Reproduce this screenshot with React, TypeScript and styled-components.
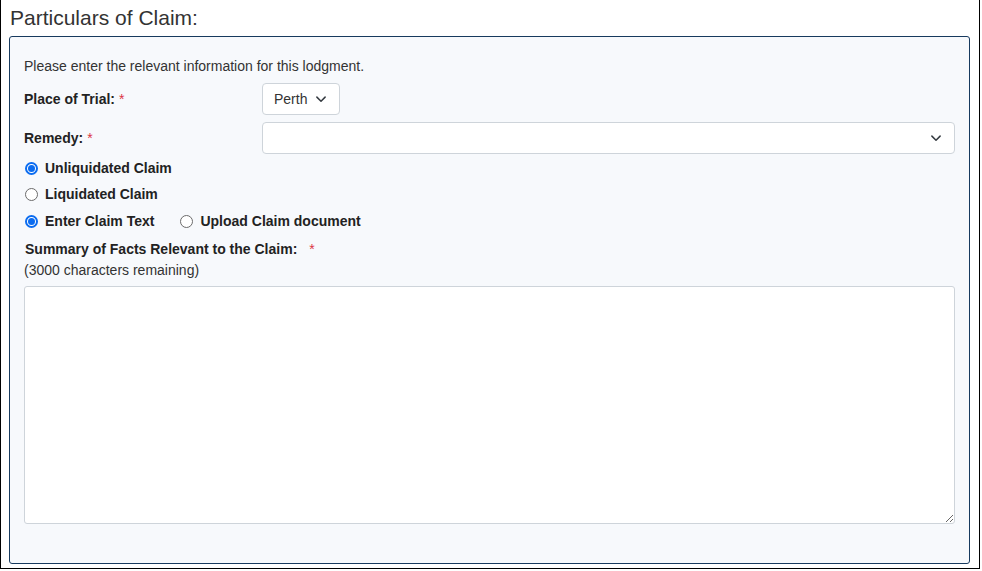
import React from "react";
import styled, { createGlobalStyle } from "styled-components";

const Global = createGlobalStyle`
  html, body { margin: 0; padding: 0; background: #fff; }
  body { font-family: "Liberation Sans", Arial, sans-serif; color: #212529; }
  * { box-sizing: border-box; }
`;

const Frame = styled.div`
  width: 980px;
  height: 569px;
  border: 1px solid #000;
  border-top: none;
  display: flex;
  flex-direction: column;
`;

const Heading = styled.h2`
  margin: 0;
  padding: 6px 0 0 9px;
  height: 36px;
  font-size: 21px;
  font-weight: 400;
  line-height: 24px;
  color: #333;
`;

const Panel = styled.section`
  margin: 0 9px 0 8px;
  height: 528px;
  border: 1px solid #173a5e;
  border-radius: 3px;
  background: #f7f9fc;
  padding: 20px 14px 0 14px;
  display: flex;
  flex-direction: column;
`;

const Intro = styled.p`
  margin: 0 0 8px;
  font-size: 14px;
  line-height: 18px;
  color: #333;
`;

const Fields = styled.div`
  display: flex;
  flex-direction: column;
  gap: 7px;
`;

const FieldRow = styled.div`
  display: flex;
  align-items: center;
`;

const Label = styled.label`
  width: 238px;
  font-size: 14px;
  font-weight: 700;
  color: #222;
`;

const Req = styled.span<{ $gap?: number }>`
  color: #dc3545;
  font-weight: 400;
  margin-left: ${(p) => p.$gap ?? 4}px;
`;

const SelectBox = styled.div<{ $wide?: boolean }>`
  height: 32px;
  ${(p) => (p.$wide ? "flex: 1;" : "width: 78px;")}
  background: #fff;
  border: 1px solid #ced4da;
  border-radius: 4px;
  display: flex;
  align-items: center;
  justify-content: space-between;
  padding: 0 12px 0 11px;
  font-size: 14px;
  color: #333;
`;

const RadioGroup = styled.div`
  display: flex;
  flex-direction: column;
  margin-top: 1px;
`;

const RadioRow = styled.div`
  display: flex;
  align-items: center;
  height: 26px;
  gap: 25px;
  &:last-child {
    margin-top: 1px;
  }
`;

const RadioItem = styled.label`
  display: flex;
  align-items: center;
  gap: 7px;
  font-size: 14px;
  font-weight: 700;
  color: #222;
`;

const RadioDot = styled.span<{ $on?: boolean }>`
  width: 13px;
  height: 13px;
  border-radius: 50%;
  border: ${(p) => (p.$on ? "2px solid #0b6cf0" : "1px solid #6b6b6b")};
  background: #fff;
  display: inline-flex;
  align-items: center;
  justify-content: center;
  margin-left: 1px;
  &::after {
    content: "";
    width: 7px;
    height: 7px;
    border-radius: 50%;
    background: ${(p) => (p.$on ? "#0b6cf0" : "transparent")};
  }
`;

const SummaryLabel = styled.div`
  margin-top: 7px;
  font-size: 14px;
  font-weight: 700;
  color: #222;
  padding-left: 1px;
  line-height: 16px;
`;

const Remaining = styled.div`
  font-size: 14px;
  color: #333;
  line-height: 18px;
  margin-top: 4px;
`;

const TextArea = styled.textarea`
  margin-top: 7px;
  width: 931px;
  height: 238px;
  border: 1px solid #ced4da;
  border-radius: 3px;
  background: #fff;
  resize: vertical;
  font-family: inherit;
`;

const Chevron = () => (
  <svg width="12" height="12" viewBox="0 0 16 16" fill="none">
    <path d="M2.5 5.5 8 11l5.5-5.5" stroke="#343a40" strokeWidth="2" strokeLinecap="round" strokeLinejoin="round" />
  </svg>
);

export default function App() {
  return (
    <>
      <Global />
      <Frame>
        <Heading>Particulars of Claim:</Heading>
        <Panel>
          <Intro>Please enter the relevant information for this lodgment.</Intro>
          <Fields>
            <FieldRow>
              <Label>
                Place of Trial:<Req>*</Req>
              </Label>
              <SelectBox>
                Perth <Chevron />
              </SelectBox>
            </FieldRow>
            <FieldRow>
              <Label>
                Remedy:<Req>*</Req>
              </Label>
              <SelectBox $wide>
                <span />
                <Chevron />
              </SelectBox>
            </FieldRow>
          </Fields>
          <RadioGroup>
            <RadioRow>
              <RadioItem>
                <RadioDot $on />
                Unliquidated Claim
              </RadioItem>
            </RadioRow>
            <RadioRow>
              <RadioItem>
                <RadioDot />
                Liquidated Claim
              </RadioItem>
            </RadioRow>
            <RadioRow>
              <RadioItem>
                <RadioDot $on />
                Enter Claim Text
              </RadioItem>
              <RadioItem>
                <RadioDot />
                Upload Claim document
              </RadioItem>
            </RadioRow>
          </RadioGroup>
          <SummaryLabel>
            Summary of Facts Relevant to the Claim:<Req $gap={12}>*</Req>
          </SummaryLabel>
          <Remaining>(3000 characters remaining)</Remaining>
          <TextArea />
        </Panel>
      </Frame>
    </>
  );
}
